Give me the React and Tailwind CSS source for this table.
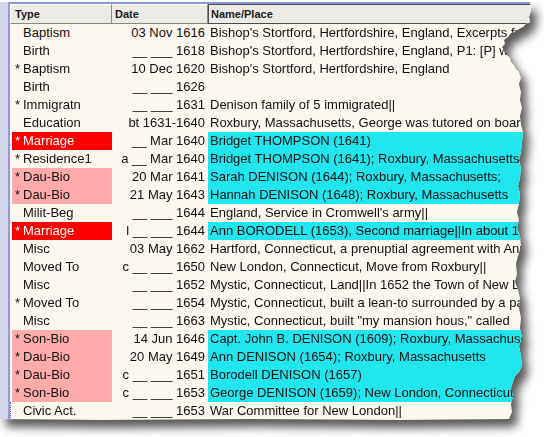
import React from 'react';

const ROWS = [
  { type: 'Baptism', date: '03 Nov 1616', name: "Bishop's Stortford, Hertfordshire, England, Excerpts from the parish register" },
  { type: 'Birth', date: '__ ___ 1618', name: "Bishop's Stortford, Hertfordshire, England, P1: [P] was born" },
  { star: true, type: 'Baptism', date: '10 Dec 1620', name: "Bishop's Stortford, Hertfordshire, England" },
  { type: 'Birth', date: '__ ___ 1626', name: '' },
  { star: true, type: 'Immigratn', date: '__ ___ 1631', name: 'Denison family of 5 immigrated||' },
  { type: 'Education', date: 'bt 1631-1640', name: 'Roxbury, Massachusetts, George was tutored on board' },
  { star: true, type: 'Marriage', tone: 'red', date: '__ Mar 1640', name: 'Bridget THOMPSON (1641)', cyan: true },
  { star: true, type: 'Residence1', date: 'a __ Mar 1640', name: 'Bridget THOMPSON (1641); Roxbury, Massachusetts', cyan: true },
  { star: true, type: 'Dau-Bio', tone: 'pink', date: '20 Mar 1641', name: 'Sarah DENISON (1644); Roxbury, Massachusetts;', cyan: true },
  { star: true, type: 'Dau-Bio', tone: 'pink', date: '21 May 1643', name: 'Hannah DENISON (1648); Roxbury, Massachusetts', cyan: true },
  { type: 'Milit-Beg', date: '__ ___ 1644', name: "England, Service in Cromwell's army||" },
  { star: true, type: 'Marriage', tone: 'red', date: 'l __ ___ 1644', name: 'Ann BORODELL (1653), Second marriage||In about 1645', cyan: true },
  { type: 'Misc', date: '03 May 1662', name: 'Hartford, Connecticut, a prenuptial agreement with Ann' },
  { type: 'Moved To', date: 'c __ ___ 1650', name: 'New London, Connecticut, Move from Roxbury||' },
  { type: 'Misc', date: '__ ___ 1652', name: 'Mystic, Connecticut, Land||In 1652 the Town of New London' },
  { star: true, type: 'Moved To', date: '__ ___ 1654', name: 'Mystic, Connecticut, built a lean-to surrounded by a palisade' },
  { type: 'Misc', date: '__ ___ 1663', name: 'Mystic, Connecticut, built "my mansion hous," called' },
  { star: true, type: 'Son-Bio', tone: 'pink', date: '14 Jun 1646', name: 'Capt. John B. DENISON (1609); Roxbury, Massachusetts', cyan: true },
  { star: true, type: 'Dau-Bio', tone: 'pink', date: '20 May 1649', name: 'Ann DENISON (1654); Roxbury, Massachusetts', cyan: true },
  { star: true, type: 'Dau-Bio', tone: 'pink', date: 'c __ ___ 1651', name: 'Borodell DENISON (1657)', cyan: true },
  { star: true, type: 'Son-Bio', tone: 'pink', date: 'c __ ___ 1653', name: 'George DENISON (1659); New London, Connecticut', cyan: true },
  { type: 'Civic Act.', date: '__ ___ 1653', name: 'War Committee for New London||', focus: true },
];

function Row({ row }) {
  const typeTone =
    row.tone === 'red'
      ? 'bg-[#ff0000] text-white'
      : row.tone === 'pink'
        ? 'bg-[#ffabab] text-[#111]'
        : 'text-[#111]';

  return (
    <div
      className={`flex h-[18px] items-center leading-[18px] ${
        row.focus ? 'border-l border-dotted border-[#4f55d6] pl-[1px]' : 'pl-[2px]'
      }`}
    >
      <div className={`flex w-[100px] shrink-0 pl-[3px] ${typeTone}`}>
        <span className="w-[8px] shrink-0">{row.star ? '*' : ''}</span>
        <span className="whitespace-nowrap">{row.type}</span>
      </div>
      <div className="w-[96px] shrink-0 whitespace-pre pr-[3px] text-right text-[#111]">{row.date}</div>
      <div
        className={`flex-1 overflow-hidden whitespace-nowrap pl-[2px] text-[#111] ${
          row.cyan ? 'bg-[#22e6ee]' : ''
        }`}
      >
        {row.name}
      </div>
    </div>
  );
}

export default function App() {
  return (
    <div className="h-[437px] w-[544px] overflow-hidden bg-white font-['Liberation_Sans',Arial,sans-serif]">
      <div className="mt-[2px] [filter:drop-shadow(6px_8px_5px_rgba(0,0,0,0.65))]">
        <div className="flex w-[540px] bg-[#fcf7ef] text-[13px] [clip-path:polygon(0_0,530px_0,531px_8px,529px_15px,530px_20px,526px_22px,523px_25px,519px_27px,516px_30px,511px_31px,508px_35px,504px_38px,505px_42px,502px_45px,505px_49px,507px_53px,510px_56px,511px_60px,514px_63px,516px_67px,519px_70px,521px_76px,519px_82px,521px_90px,520px_98px,522px_106px,520px_114px,521px_122px,523px_130px,522px_140px,521px_150px,519px_158px,521px_166px,520px_176px,518px_184px,520px_192px,519px_202px,517px_210px,519px_218px,517px_226px,520px_234px,521px_244px,518px_254px,516px_262px,517px_272px,515px_280px,518px_288px,520px_296px,519px_306px,521px_316px,520px_326px,522px_336px,519px_344px,521px_354px,522px_364px,519px_370px,515px_374px,513px_380px,511px_386px,513px_394px,511px_402px,512px_410px,509px_417px,400px_418px,250px_417px,100px_418px,0_417px)]">
          <div className="w-[8px] shrink-0 bg-[#d3d6ea]" />
          <div className="w-[2px] shrink-0 bg-[#9599da]" />
          <div className="flex min-w-0 flex-1 flex-col">
            <div className="h-[2px] bg-[#8f93d8]" />
            <div className="flex h-[20px] bg-[#ecebe6] text-[11px] font-bold leading-[18px] text-[#1a1a1a]">
              <div className="w-[102px] shrink-0 border-b border-l border-r border-t border-b-[#8a8985] border-l-white border-r-[#8a8985] border-t-white pl-[4px]">
                Type
              </div>
              <div className="w-[96px] shrink-0 border-b border-r border-t border-b-[#8a8985] border-r-[#8a8985] border-t-white pl-[3px]">
                Date
              </div>
              <div className="flex-1 border border-[#4a4a4a] pl-[2px]">Name/Place</div>
            </div>
            <div className="flex flex-col">
              {ROWS.map((row, i) => (
                <Row key={i} row={row} />
              ))}
            </div>
          </div>
        </div>
      </div>
    </div>
  );
}
